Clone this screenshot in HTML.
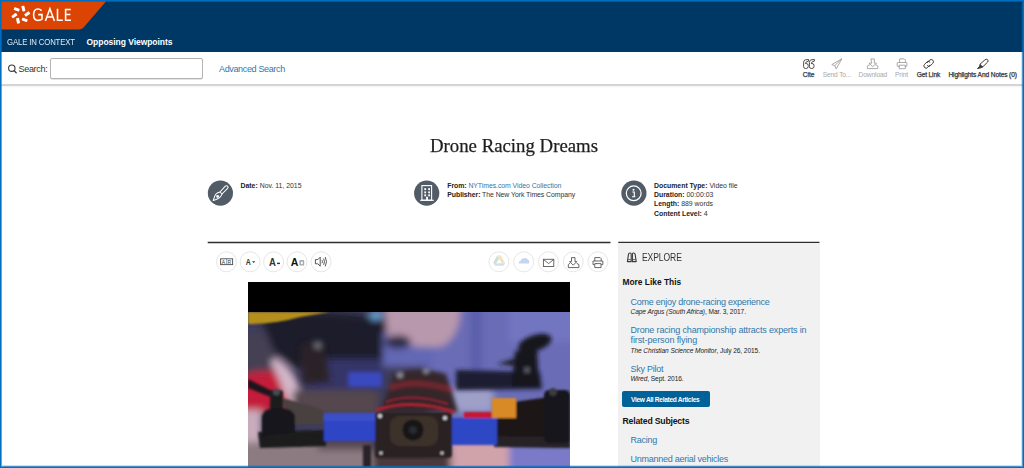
<!DOCTYPE html>
<html><head><meta charset="utf-8">
<style>
*{margin:0;padding:0;box-sizing:border-box}
html,body{width:1024px;height:468px;overflow:hidden;background:#fff;font-family:"Liberation Sans",sans-serif;color:#222}
.frame{position:absolute;left:0;top:0;width:1024px;height:468px;border:1px solid #006fbf;pointer-events:none;z-index:50}
.fr2{position:absolute;left:1px;top:1px;width:1022px;height:466px;border:1px solid rgba(0,111,191,0.6);border-right-color:rgba(0,111,191,0.7);border-bottom-color:rgba(0,111,191,0.75);z-index:50}
.fr3{position:absolute;left:2px;top:2px;width:1020px;height:464px;border:1px solid transparent;border-right-color:rgba(0,111,191,0.18);border-bottom-color:rgba(0,111,191,0.2);z-index:50}
.abs{position:absolute}
.nav{position:absolute;left:0;top:0;width:1024px;height:52px;background:#003865}
.t{position:absolute;white-space:nowrap;line-height:1}
.link{color:#2f78ab}
.toolbar{position:absolute;left:0;top:52px;width:1024px;height:34px;background:#fff;border-bottom:2px solid #d2d4d6;box-shadow:0 1px 2px rgba(0,0,0,0.05)}
.input{position:absolute;left:50px;top:58.2px;width:152.5px;height:21px;border:1px solid #b4b4b4;border-radius:2px;background:#fff;box-shadow:0 0.5px 0 #c8c8c8}
.tl{position:absolute;top:72px;font-size:6.6px;white-space:nowrap;line-height:1;letter-spacing:-0.1px}
.title{position:absolute;left:2px;width:1024px;text-align:center;top:134.5px;font-family:"Liberation Serif",serif;font-size:19.3px;color:#1e1e1e;-webkit-text-stroke:0.25px #1e1e1e;transform:scaleX(0.975)}
.mcirc{position:absolute;width:26px;height:26px;border-radius:50%;background:#515b65}
.meta{position:absolute;font-size:6.9px;line-height:9.2px;color:#333;white-space:nowrap}
.meta b{font-weight:bold;color:#222}
.hr{position:absolute;height:2px;background:#2b2b2b}
.cbtn{position:absolute;top:252px;width:20px;height:20px;border:1px solid #e4e4e4;border-radius:50%;background:#fff}
.cbtn svg{position:absolute;left:0;top:0}
.explore{position:absolute;left:618.3px;top:243.2px;width:201.7px;height:225px;background:#f1f1f1}
.ex{position:absolute;white-space:nowrap;line-height:1}
.lk{font-size:9px;color:#2f78ab;letter-spacing:-0.25px}
.src{font-size:6.6px;color:#222;letter-spacing:-0.08px}
</style></head><body>
<div class="nav"></div>
<svg class="abs" style="left:0;top:0" width="110" height="31" viewBox="0 0 110 31">
  <path d="M0 0 H107.2 L83.6 27.6 Q82 29.6 78.5 29.6 H0 Z" fill="#dc4404"/>
  <g fill="#fff">
    <rect x="-2.8" y="-1.5" width="5.6" height="3" rx="0.6" transform="translate(16.7 9.4) rotate(20)"/>
    <rect x="-1.5" y="-2.8" width="3" height="5.6" rx="0.6" transform="translate(23.4 8.6) rotate(-12)"/>
    <rect x="-2.8" y="-1.5" width="5.6" height="3" rx="0.6" transform="translate(27.2 14) rotate(-35)"/>
    <rect x="-2.8" y="-1.5" width="5.6" height="3" rx="0.6" transform="translate(14.4 15.6) rotate(-35)"/>
    <rect x="-1.5" y="-2.8" width="3" height="5.6" rx="0.6" transform="translate(18 20.7) rotate(-12)"/>
    <rect x="-2.8" y="-1.5" width="5.6" height="3" rx="0.6" transform="translate(24.7 19.9) rotate(20)"/>
  </g>
</svg>
<svg class="abs" style="left:0;top:0" width="80" height="30" viewBox="0 0 80 30" fill="none" stroke="#fff" stroke-width="1.55">
  <path d="M41.6 10.6 Q40 8.9 37.9 8.9 Q33.6 8.9 33.6 14.8 Q33.6 20.4 37.9 20.4 Q40.6 20.4 42 19.2 V14.6 H38.2"/>
  <path d="M45.4 20.9 L49.9 8.8 L54.4 20.9 M46.8 16.9 H53"/>
  <path d="M57.5 8.8 V20.2 H62.8"/>
  <path d="M70.8 9.4 H65.6 V20.2 H71 M65.6 14.5 H70.4"/>
</svg>
<div class="t" style="left:6.5px;top:37.5px;font-size:8.5px;color:#e3e8ee;letter-spacing:-0.15px;transform:scaleX(0.915);transform-origin:0 0">GALE IN CONTEXT</div>
<div class="t" style="left:86.5px;top:37.5px;font-size:8.5px;color:#fff;font-weight:bold;letter-spacing:-0.04px">Opposing Viewpoints</div>

<div class="toolbar"></div>
<svg class="abs" style="left:6px;top:62px" width="14" height="14" viewBox="6 62 14 14"><circle cx="11.8" cy="68.2" r="3.2" fill="none" stroke="#3a3a3a" stroke-width="1.1"/><path d="M14.1 70.6 L16.2 72.8" stroke="#3a3a3a" stroke-width="1.3" stroke-linecap="round"/></svg>
<div class="t" style="left:18.5px;top:65px;font-size:9px;color:#333;letter-spacing:-0.3px">Search:</div>
<div class="input"></div>
<div class="t link" style="left:219px;top:64.6px;font-size:9px;letter-spacing:-0.35px">Advanced Search</div>

<!-- toolbar icons -->
<svg class="abs" style="left:800px;top:56px" width="220" height="15" viewBox="800 56 220 15" fill="none" stroke-linejoin="round" stroke-linecap="round">
  <g stroke="#444" stroke-width="0.95"><path d="M808.2 59.5 L805.2 59.9 Q803.6 60.3 803.6 62.5 V66.5 Q803.6 68.5 805.6 68.5 H806.2 Q808.2 68.5 808.2 66.5 V65.5 Q808.2 63.5 806.2 63.5 H805.4 Q805.6 61.6 808.2 61.2 Z"/><path d="M814.0 59.5 L811.0 59.9 Q809.4 60.3 809.4 62.5 V66.5 Q809.4 68.5 811.4 68.5 H812.0 Q814.0 68.5 814.0 66.5 V65.5 Q814.0 63.5 812.0 63.5 H811.2 Q811.4 61.6 814.0 61.2 Z"/></g>
  <g stroke="#a0a0a0" stroke-width="0.9">
    <path d="M841.5 59 L831.8 64.6 L834.8 65.6 L836 68.6 Z"/>
    <path d="M841.5 59 L834.8 65.6"/>
  </g>
  <g stroke="#a0a0a0" stroke-width="0.9">
    <path d="M871.3 58.9 H874.3 V63.2 H876.6 L872.8 66.6 L869 63.2 H871.3 Z"/>
    <path d="M869.6 65.1 H868.2 L867.4 66.2 V68.6 H877.8 V66.2 L877 65.1 H876"/>
  </g>
  <g stroke="#a0a0a0" stroke-width="0.9">
    <path d="M899.6 62.4 V58.9 H904.4 L905.4 59.9 V62.4"/>
    <path d="M899.2 66.4 H897.6 Q897.2 66.4 897.2 66 V63 Q897.2 62.5 897.7 62.5 H906.4 Q906.9 62.5 906.9 63 V66 Q906.9 66.4 906.5 66.4 H905.2"/>
    <path d="M899.6 65.2 H905.3 V68.7 H899.6 Z"/>
  </g>
  <g stroke="#3a3a3a" stroke-width="1">
    <path d="M927.3 62.6 L929.6 60.2 Q931.2 58.6 932.8 60.2 Q934.3 61.8 932.7 63.4 L930.4 65.7 Q928.9 67.2 927.4 65.7"/>
    <path d="M930.1 65.1 L927.7 67.5 Q926.1 69.1 924.5 67.5 Q923 65.9 924.6 64.3 L926.9 62 Q928.4 60.5 929.9 62"/>
  </g>
  <g stroke="#3a3a3a" stroke-width="1">
    <path d="M985 59.8 Q986.4 58.5 987.6 59.7 Q988.8 60.9 987.5 62.2 L982.6 67 L980.2 64.6 Z"/>
    <path d="M980.2 64.6 L979.4 66.6 L977.5 68.6 L980.6 67.8 L982.6 67" fill="#3a3a3a"/>
  </g>
</svg>
<div class="tl" style="left:802.8px;color:#333;-webkit-text-stroke:0.25px #333;letter-spacing:0px">Cite</div>
<div class="tl" style="left:822.8px;color:#a8a8a8;letter-spacing:-0.15px">Send To...</div>
<div class="tl" style="left:858.6px;color:#a8a8a8">Download</div>
<div class="tl" style="left:895px;color:#a8a8a8">Print</div>
<div class="tl" style="left:916.7px;color:#333;-webkit-text-stroke:0.25px #333;letter-spacing:-0.15px">Get Link</div>
<div class="tl" style="left:948.4px;color:#333;-webkit-text-stroke:0.25px #333;letter-spacing:-0.11px">Highlights And Notes (0)</div>

<div class="title">Drone Racing Dreams</div>

<!-- meta -->
<svg class="abs" style="left:200px;top:175px" width="460" height="36" viewBox="200 175 460 36">
  <g fill="#525c66">
    <circle cx="220.4" cy="193.1" r="12.6"/>
    <circle cx="426.7" cy="193.2" r="12.6"/>
    <circle cx="633.9" cy="193.1" r="12.6"/>
  </g>
  <g fill="none" stroke="#fff" stroke-width="1.05" stroke-linejoin="round">
    <path d="M225.3 186.2 Q226.6 185.2 227.6 186.2 Q228.6 187.2 227.6 188.4 L222 194 L220 192 Z"/>
    <path d="M220 192 Q217.6 192.4 216 194 Q214.6 195.8 214.3 197.6 L213.2 200.4 L216.2 199.4 Q218.2 198.8 220 197.2 Q221.6 195.8 222 194"/>
    <circle cx="217.6" cy="196.4" r="0.9" fill="#fff"/>
  </g>
  <g fill="none" stroke="#fff" stroke-width="1.1">
    <rect x="421.9" y="185.6" width="9.7" height="14.6"/>
    <path d="M420.2 200.3 H433.8"/>
  </g>
  <g fill="#fff">
    <rect x="424.3" y="188.2" width="1.8" height="1.9"/><rect x="428.2" y="188.2" width="1.8" height="1.9"/>
    <rect x="424.3" y="191.4" width="1.8" height="1.9"/><rect x="428.2" y="191.4" width="1.8" height="1.9"/>
    <rect x="424.3" y="194.4" width="1.8" height="1.9"/><rect x="428.2" y="194.4" width="1.8" height="1.9"/>
    <rect x="426.1" y="196.8" width="1.9" height="3.6"/>
  </g>
  <circle cx="633.7" cy="193.3" r="7.4" fill="none" stroke="#fff" stroke-width="1.25"/>
  <circle cx="633.5" cy="189.8" r="1" fill="#fff"/>
  <path d="M632.3 192 H634.3 V196.6 M632 196.7 H635.3" fill="none" stroke="#fff" stroke-width="1.15"/>
</svg>
<div class="meta" style="left:240.5px;top:180.5px"><b>Date:</b> Nov. 11, 2015</div>
<div class="meta" style="left:447.3px;top:180.7px;letter-spacing:-0.06px"><b>From:</b> <span class="link">NYTimes.com Video Collection</span><br><b>Publisher:</b> The New York Times Company</div>
<div class="meta" style="left:654px;top:181px"><b>Document Type:</b> Video file<br><b>Duration:</b> 00:00:03<br><b>Length:</b> 889 words<br><b>Content Level:</b> 4</div>

<svg class="abs" style="left:0;top:236px" width="1024" height="12" viewBox="0 236 1024 12"><path d="M207.7 242.45 H610.5 M618.3 242.45 H819.5" stroke="#2e2e2e" stroke-width="1.5"/></svg>


<!-- content toolbar -->
<svg class="abs" style="left:200px;top:245px" width="420" height="35" viewBox="200 245 420 35">
  <g fill="#fff" stroke="#e3e3e3" stroke-width="0.9">
    <circle cx="226.5" cy="261.8" r="10"/><circle cx="250.1" cy="261.8" r="10"/><circle cx="273.6" cy="261.8" r="10"/><circle cx="297" cy="261.8" r="10"/><circle cx="321" cy="261.8" r="10"/>
    <circle cx="498.9" cy="261.8" r="10"/><circle cx="523.7" cy="261.8" r="10"/><circle cx="548.5" cy="261.8" r="10"/><circle cx="573.3" cy="261.8" r="10"/><circle cx="597.9" cy="261.8" r="10"/>
  </g>
  <g font-family="Liberation Sans">
    <rect x="220.6" y="258.8" width="12" height="5.8" fill="none" stroke="#5a5a5a" stroke-width="1"/>
    <path d="M226.6 258.8 V264.6" stroke="#777" stroke-width="0.7"/>
    <text x="221.8" y="263.9" font-size="5" fill="#333">A</text>
    <text x="227.6" y="263.9" font-size="5" fill="#333">R</text>
    <text x="245.8" y="264.9" font-size="8.2" font-weight="bold" fill="#333" transform="translate(245.8 0) scale(0.85 1) translate(-245.8 0)">A</text>
    <path d="M252.1 261.3 H255.3 L253.7 262.9 Z" fill="#333"/>
    <text x="269" y="266" font-size="10.6" font-weight="bold" fill="#333" transform="translate(269 0) scale(0.9 1) translate(-269 0)">A</text>
    <rect x="277" y="262.7" width="3" height="1.4" fill="#333"/>
    <text x="290.8" y="265.8" font-size="10.6" font-weight="bold" fill="#111">A</text>
    <rect x="299.4" y="260" width="4.8" height="5.6" rx="1.2" fill="#a8a8a8"/>
    <rect x="300.9" y="261.6" width="1.9" height="2.6" fill="#fff"/>
  </g>
  <g fill="none" stroke="#444" stroke-width="0.9" stroke-linejoin="round">
    <path d="M315.4 259.6 H317.8 L320.2 257.2 V266.2 L317.8 263.8 H315.4 Z"/>
    <path d="M322 260.2 Q323 261.7 322 263.2"/>
    <path d="M323.6 258.6 Q325.4 261.7 323.6 264.8"/>
    <path d="M325.2 257 Q327.8 261.7 325.2 266.4"/>
  </g>
  <!-- drive -->
  <path d="M497.2 255.6 H500.8 L505.2 263.2 H501.6 Z" fill="#f4e2c6"/>
  <path d="M497.2 255.6 L493.2 262.6 L495 265.8 L499 258.8 Z" fill="#cfe0d6"/>
  <path d="M495 265.8 H503.4 L505.2 263.2 H496.6 Z" fill="#cde0f2"/>
  <!-- cloud -->
  <path d="M519 263.4 Q518.2 261.4 520.6 260.8 Q521.6 257.6 524.4 258.4 Q526 257.4 527.4 259.2 Q529.6 259.6 529.2 262 L529 263.4 Z" fill="#c3d6ef"/>
  <!-- mail -->
  <rect x="543.4" y="259.3" width="10.4" height="7.2" fill="none" stroke="#5a5a5a" stroke-width="0.9"/>
  <path d="M543.6 259.6 L548.6 263.6 L553.6 259.6" fill="none" stroke="#5a5a5a" stroke-width="0.9"/>
  <!-- download -->
  <g fill="none" stroke="#555" stroke-width="0.9" stroke-linejoin="round">
    <path d="M571.5 257.6 H575 V261.6 H576.8 L573.25 265.2 L569.7 261.6 H571.5 Z"/>
    <path d="M570 263.2 L568.3 264.6 V267.6 H578.9 V264.6 L576.6 263.2"/>
  </g>
  <!-- print -->
  <g fill="none" stroke="#555" stroke-width="0.9" stroke-linejoin="round">
    <path d="M594.8 261 V257.6 H600.2 L601.2 258.6 V261"/>
    <path d="M594.6 264.6 H593 V261 H602.8 V264.6 H601.2"/>
    <path d="M594.8 263.6 H601 V267.6 H594.8 Z"/>
  </g>
</svg>

<!-- video -->
<div class="abs" style="left:248px;top:282px;width:322px;height:30px;background:#000"></div>
<svg class="abs" style="left:248px;top:312px" width="322" height="156" viewBox="0 0 322 156">
  <defs>
    <filter id="b1" x="-20%" y="-20%" width="140%" height="140%"><feGaussianBlur stdDeviation="3.5"/></filter>
    <filter id="b4" x="-30%" y="-30%" width="160%" height="160%"><feGaussianBlur stdDeviation="3.2"/></filter>
    <filter id="b3" x="-30%" y="-30%" width="160%" height="160%"><feGaussianBlur stdDeviation="2.2"/></filter>
    <filter id="b2" x="-20%" y="-20%" width="140%" height="140%"><feGaussianBlur stdDeviation="1"/></filter>
    <clipPath id="cp"><rect width="322" height="156"/></clipPath>
  </defs>
  <g clip-path="url(#cp)">
  <rect width="322" height="156" fill="#3e3c5a"/>
  <g filter="url(#b1)">
    <rect x="180" y="-10" width="160" height="180" fill="#6a6cb6"/>
    <rect x="260" y="-10" width="70" height="40" fill="#7274c0"/>
    <rect x="222" y="-10" width="12" height="70" fill="#5c5eaa"/>
    <rect x="-10" y="22" width="40" height="80" fill="#443f52"/>
    <path d="M12 4 Q80 -5 138 8 L140 52 Q90 58 45 55 L25 38 Z" fill="#1a1a2a"/>
    <path d="M135 20 L185 30 L185 55 L135 55 Z" fill="#6468b4"/>
    <path d="M135 -10 H212 Q214 22 195 34 Q165 38 140 26 Z" fill="#b898ac"/>
    <ellipse cx="128" cy="3" rx="7" ry="5" fill="#6aa2d4"/>
    <ellipse cx="150" cy="30" rx="13" ry="7" fill="#2e2a48"/>
    <rect x="58" y="47" width="76" height="30" fill="#363668"/>
    <path d="M2 60 L38 58 Q44 80 40 100 L-10 100 L-10 80 Z" fill="#c41a3a"/>
    <path d="M28 46 Q46 56 52 78 L46 98 L36 82 Q30 62 22 50 Z" fill="#d2b6c8"/>
    <rect x="-10" y="98" width="24" height="32" fill="#c8acbc"/>
    <rect x="45" y="78" width="85" height="25" fill="#54464e"/>
    <rect x="203" y="76" width="42" height="24" fill="#9ea0c8"/>
    <rect x="-10" y="130" width="135" height="40" fill="#8c7c82"/>
    <rect x="70" y="128" width="55" height="10" fill="#5a4c52"/>
    <rect x="125" y="140" width="80" height="30" fill="#4a3a3e"/>
    <rect x="203" y="128" width="58" height="40" fill="#d0a2aa"/>
    <rect x="261" y="133" width="70" height="40" fill="#7a7ac8"/>
  </g>
  <g filter="url(#b2)">
    <path d="M0 0 H82 L52 5 Q28 12 0 12 Z" fill="#b48f1e"/>
  </g>
  <g filter="url(#b4)">
    <path d="M52 35 Q60 28 75 30 L82 70 L55 72 Z" fill="#2a2228"/>
    <circle cx="70" cy="33" r="2.5" fill="#a8a8b8"/>
  </g>
  <g filter="url(#b3)">
    <rect x="100" y="60" width="34" height="15" fill="#3a4ac0"/>
    <path d="M208 58 L292 60 L294 77 L208 78 Z" fill="#1a1a30"/>
    <ellipse cx="287" cy="31" rx="17" ry="8" transform="rotate(-18 287 31)" fill="#17171f"/>
    <path d="M267 40 Q277 34 289 38 L291 75 L264 75 Z" fill="#18181f"/>
    <circle cx="279" cy="58" r="2.5" fill="#6a6a78"/>
    <path d="M249 52 L268 46 L268 54 Z" fill="#1a1a22"/>
    <path d="M146 62 Q172 54 198 62 L210 100 L132 100 Z" fill="#34262c"/>
    <path d="M142 76 Q168 66 204 78" stroke="#8a2830" stroke-width="3.5" fill="none"/>
    <circle cx="152" cy="63" r="2.2" fill="#c0c0c8"/>
    <circle cx="178" cy="59" r="2.2" fill="#a8a8b0"/>
  </g>
  <g filter="url(#b2)">
    <path d="M10 120 L78 118 L78 134 L12 136 Z" fill="#1c1a1e"/>
    <path d="M244 93 L322 82 L322 128 L248 131 Z" fill="#1e1819"/>
    <path d="M246 124 L322 125 L322 136 L246 135 Z" fill="#262228"/>
    <path d="M34 86 L70 96 L80 103 L74 112 L40 112 Z" fill="#48403f"/>
    <path d="M0 67 L30 82 L28 87 L0 76 Z" fill="#1c181c"/>
    <rect x="22" y="78" width="13" height="20" rx="3" fill="#1a1a1e"/>
    <circle cx="28.5" cy="80" r="3.5" fill="#4a4a52"/>
    <path d="M14 106 Q14 96 30 96 Q47 96 47 106 L47 130 L14 130 Z" fill="#17171b"/>
    <ellipse cx="42" cy="128" rx="30" ry="7" fill="#1b1b1f"/>
    <rect x="296" y="78" width="26" height="53" rx="5" fill="#18181c"/>
    <circle cx="305" cy="80" r="4" fill="#3a3a42"/>
    <rect x="76" y="101" width="52" height="28" fill="#2d45c6"/>
    <rect x="76" y="101" width="52" height="8" fill="#3a50c8"/>
    <rect x="201" y="106" width="48" height="27" fill="#2e46c4"/>
    <rect x="216" y="100" width="30" height="6" fill="#c8182e"/>
    <rect x="244" y="86" width="24" height="20" fill="#d88a28"/>
    <rect x="127" y="100" width="77" height="46" rx="4" fill="#2a2020"/>
    <rect x="142" y="104" width="48" height="30" rx="9" fill="#3e302c"/>
    <path d="M128 98 Q165 86 206 100" stroke="#b42030" stroke-width="3" fill="none"/>
    <path d="M138 90 Q165 80 200 92" stroke="#9a2030" stroke-width="2" fill="none"/>
    <circle cx="165" cy="118" r="10.5" fill="#151318"/>
    <circle cx="165" cy="118" r="4" fill="#2a2a30"/>
    <circle cx="132" cy="104" r="2" fill="#e0e0e8"/>
    <circle cx="197" cy="106" r="2" fill="#e0e0e8"/>
    <circle cx="133" cy="141" r="1.6" fill="#d8d8e0"/>
    <circle cx="194" cy="141" r="1.6" fill="#d8d8e0"/>
    <rect x="115" y="133" width="8" height="25" fill="#2a2428"/>
  </g>
  </g>
</svg>

<!-- explore -->
<div class="explore"></div>
<svg class="abs" style="left:620px;top:248px" width="20" height="18" viewBox="620 248 20 18" fill="none" stroke="#3a3a3a" stroke-width="1.1" stroke-linejoin="round">
  <path d="M627.4 261.6 L628.5 254.2 Q628.8 253 629.9 253 H630.3 Q631.2 253 631.2 254.2 V261.6 Z"/>
  <path d="M636.2 261.6 L635.1 254.2 Q634.8 253 633.7 253 H633.3 Q632.4 253 632.4 254.2 V261.6 Z"/>
  <path d="M628.2 259.6 H630.6 M633 259.6 H635.4" stroke-width="0.8"/>
</svg>
<div class="ex" style="left:641.5px;top:253.3px;font-size:10.2px;color:#333;letter-spacing:-0.1px;transform:scaleX(0.84);transform-origin:0 0">EXPLORE</div>
<div class="ex" style="left:622.5px;top:277.5px;font-size:8.4px;font-weight:bold;color:#111;letter-spacing:0px">More Like This</div>
<div class="ex lk" style="left:630.5px;top:297.5px">Come enjoy drone-racing experience</div>
<div class="ex src" style="left:630.5px;top:308.6px"><i>Cape Argus (South Africa)</i>, Mar. 3, 2017.</div>
<div class="ex lk" style="left:630.5px;top:325.5px;letter-spacing:-0.16px">Drone racing championship attracts experts in</div>
<div class="ex lk" style="left:630.5px;top:336.1px;letter-spacing:-0.1px">first-person flying</div>
<div class="ex src" style="left:630.5px;top:347.8px"><i>The Christian Science Monitor</i>, July 26, 2015.</div>
<div class="ex lk" style="left:630.5px;top:364.5px">Sky Pilot</div>
<div class="ex src" style="left:630.5px;top:376.2px"><i>Wired</i>, Sept. 2016.</div>
<div class="abs" style="left:622px;top:391px;width:88px;height:16px;background:#016199;border-radius:2px"></div>
<div class="ex" style="left:631px;top:396.6px;font-size:6.6px;color:#fff;font-weight:bold;letter-spacing:-0.32px">View All Related Articles</div>
<div class="ex" style="left:622.5px;top:417.3px;font-size:8.7px;font-weight:bold;color:#111;letter-spacing:-0.2px">Related Subjects</div>
<div class="ex lk" style="left:630.5px;top:436.3px">Racing</div>
<div class="ex lk" style="left:630.5px;top:455.3px">Unmanned aerial vehicles</div>

<div class="frame"></div><div class="fr2"></div><div class="fr3"></div>
</body></html>
